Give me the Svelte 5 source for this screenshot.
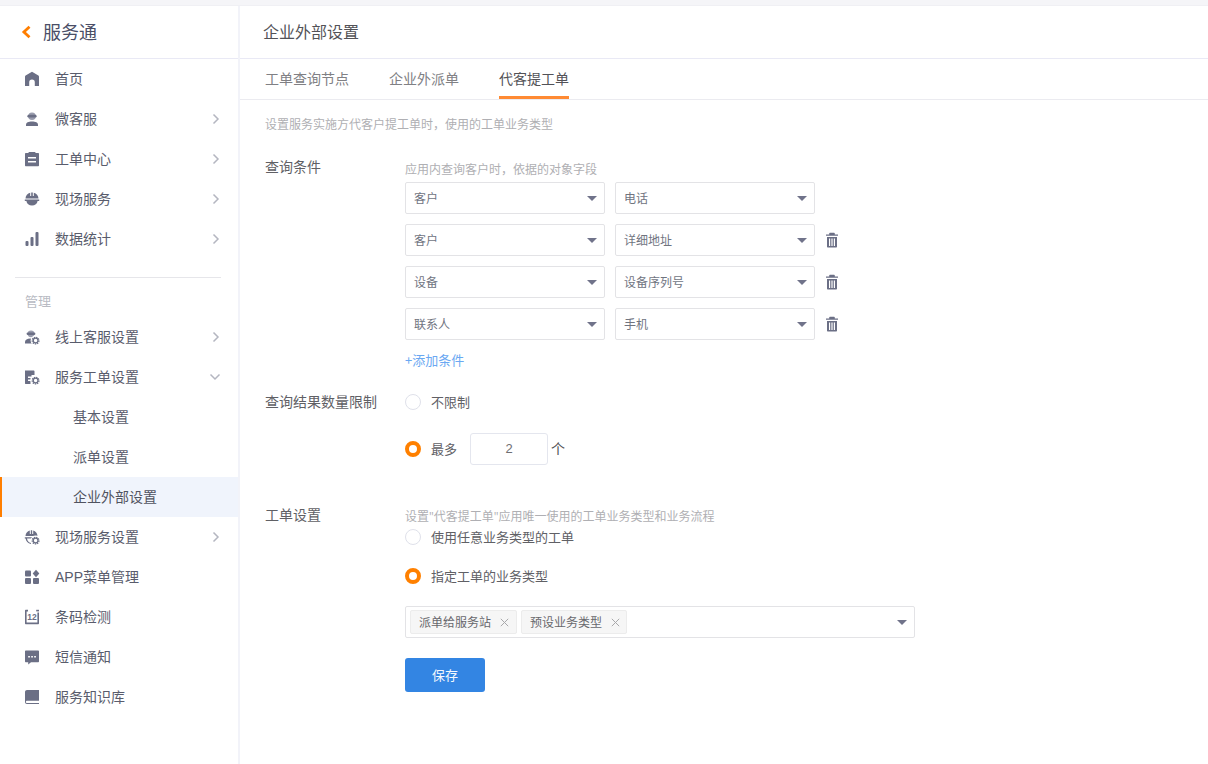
<script>
  const topMenu = [
    { label: "首页", icon: "home" },
    { label: "微客服", icon: "agent", arrow: "right" },
    { label: "工单中心", icon: "clipboard", arrow: "right" },
    { label: "现场服务", icon: "helmet", arrow: "right" },
    { label: "数据统计", icon: "bars", arrow: "right" },
  ];
  const adminMenu = [
    { label: "线上客服设置", icon: "agent-gear", arrow: "right" },
    { label: "服务工单设置", icon: "clipboard-gear", arrow: "down" },
    { label: "基本设置", sub: true },
    { label: "派单设置", sub: true },
    { label: "企业外部设置", sub: true, active: true },
    { label: "现场服务设置", icon: "helmet-gear", arrow: "right" },
    { label: "APP菜单管理", icon: "apps" },
    { label: "条码检测", icon: "code" },
    { label: "短信通知", icon: "chat" },
    { label: "服务知识库", icon: "book" },
  ];
  const tabs = ["工单查询节点", "企业外派单", "代客提工单"];
  const conditions = [
    ["客户", "电话"],
    ["客户", "详细地址"],
    ["设备", "设备序列号"],
    ["联系人", "手机"],
  ];
  const tags = ["派单给服务站", "预设业务类型"];
</script>

{#snippet gear()}
  <circle cx="11.6" cy="11.6" r="5" fill="#fff" />
  <circle cx="11.6" cy="11.6" r="3.4" fill="none" stroke="#6b6f85" stroke-width="1.2" stroke-dasharray="1.4 0.9" />
  <circle cx="11.6" cy="11.6" r="2.4" fill="none" stroke="#6b6f85" stroke-width="1.3" />
{/snippet}

{#snippet icon(name)}
  <svg class="icon" viewBox="0 0 16 16" fill="#6b6f85">
    {#if name === "home"}
      <path d="M8 .8 14.4 4.6c.4.3.6.6.6 1.1V15H10.800v-3.600a2.800 2.800 0 0 0-5.600 0V15H1V5.700c0-.5.2-.8.6-1.100Z" />
    {:else if name === "agent"}
      <circle cx="8" cy="5.200" r="3.800" fill="#9a9dae" />
      <rect x="3.400" y="3.800" width="9.200" height="2.800" rx="1.400" />
      <path d="M2 15v-1.500c0-1.900 2.400-3.100 6-3.100s6 1.200 6 3.100V15Z" />
    {:else if name === "clipboard"}
      <path fill-rule="evenodd" d="M2 2h2.600V1h6.800v1H14c.6 0 1 .4 1 1v11.200c0 .6-.4 1-1 1H2c-.6 0-1-.4-1-1V3c0-.6.4-1 1-1Zm2 4v1.600h8V6Zm0 4v1.600h8V10Z" />
    {:else if name === "helmet"}
      <path d="M1.500 7.400C1.600 4.600 3.600 2.400 6.200 1.800V5h1V1.400h1.600V5h1V1.800c2.600.6 4.600 2.800 4.700 5.600Z" />
      <path d="M.8 8.600h14.400V10H13.600c-.4 2.800-2.600 4.600-5.600 4.600S2.800 12.800 2.400 10H.8Z" />
    {:else if name === "bars"}
      <rect x="1.500" y="10" width="3" height="5" rx="1" />
      <rect x="6.500" y="6" width="3" height="9" rx="1" />
      <rect x="11.500" y="1" width="3" height="14" rx="1" />
    {:else if name === "agent-gear"}
      <circle cx="7" cy="4.800" r="3.400" fill="#9a9dae" />
      <rect x="2.600" y="3.400" width="8.800" height="2.600" rx="1.300" />
      <path d="M1 14.500v-1.800c0-2 2.300-3.300 5-3.300s5 1.300 5 3.300v1.800Z" />
      {@render gear()}
    {:else if name === "clipboard-gear"}
      <path d="M1 1.500h8.500c.6 0 1 .4 1 1V6H7.500v1.500H4V9h2.500v1.500H4V12h2.500v3H1.500c-.3 0-.5-.2-.5-.5Z" />
      {@render gear()}
    {:else if name === "helmet-gear"}
      <path d="M1.500 7C1.600 4.400 3.400 2.200 5.800 1.600V5h1V1.300h1.400V5h1V1.600c2.400.6 4.200 2.800 4.300 5.400Z" />
      <path d="M.8 8.200h8.700v1.400H3c.3 2.400 1.800 4 4 4.500v1C3.800 14.600 2 12.400 1.600 9.600H.8Z" />
      {@render gear()}
    {:else if name === "apps"}
      <rect x="1" y="1.500" width="6" height="6" rx="1" />
      <rect x="1" y="9" width="6" height="6" rx="1" />
      <rect x="9" y="9" width="6" height="6" rx="1" />
      <path d="M12 .8 15.300 4.500 12 8.200 8.700 4.500Z" />
    {:else if name === "code"}
      <path d="M2 .8h2v1.600H2.600v11.200h10.800V3.400H15v10.800c0 .6-.4 1-1 1H2c-.6 0-1-.4-1-1V1.800c0-.6.4-1 1-1Z" />
      <rect x="12.200" y=".8" width="2.800" height="1.600" />
      <text x="8" y="11.300" text-anchor="middle" class="icon-num">12</text>
    {:else if name === "chat"}
      <path fill-rule="evenodd" d="M2 1.500h12c.6 0 1 .4 1 1v9.800c0 .6-.4 1-1 1H7l-2.800 2.200v-2.200H2c-.6 0-1-.4-1-1V2.500c0-.6.4-1 1-1Zm2.200 5.400v1.700h1.700V6.900Zm3 0v1.700h1.700V6.900Zm3 0v1.700h1.700V6.900Z" />
    {:else if name === "book"}
      <path d="M3 1h12v10.800H3.200c-.8 0-1.300.5-1.300 1.100s.5 1.100 1.300 1.100H15v1H3c-1.200 0-2-.9-2-2V3c0-1.100.9-2 2-2Z" />
    {/if}
  </svg>
{/snippet}

{#snippet menuRow(item)}
  <div class="item" class:sub={item.sub} class:active={item.active}>
    {#if item.icon}
      {@render icon(item.icon)}
    {/if}
    <span class="item-label">{item.label}</span>
    {#if item.arrow === "right"}
      <svg class="arrow" viewBox="0 0 10 12"><path d="M2.500 1.500 7 6l-4.500 4.500" /></svg>
    {:else if item.arrow === "down"}
      <svg class="arrow down" viewBox="0 0 12 10"><path d="M1.500 2.500 6 7l4.500-4.500" /></svg>
    {/if}
  </div>
{/snippet}

{#snippet select(text)}
  <div class="select">
    <span class="select-text">{text}</span>
    <i class="caret"></i>
  </div>
{/snippet}

{#snippet radio(text, checked)}
  <div class="radio-row">
    <span class="radio" class:checked></span>
    <span class="radio-text">{text}</span>
  </div>
{/snippet}

<div class="page">
  <div class="top-strip"></div>
  <div class="shell">
    <aside class="sidebar">
      <div class="brand">
        <svg class="back" viewBox="0 0 10 14"><path d="M8.500 1.800 2.900 7l5.600 5.200" /></svg>
        <span class="brand-text">服务通</span>
      </div>
      {#each topMenu as item}
        {@render menuRow(item)}
      {/each}
      <div class="divider"></div>
      <div class="group-title">管理</div>
      {#each adminMenu as item}
        {@render menuRow(item)}
      {/each}
    </aside>

    <main class="main">
      <header class="title">企业外部设置</header>
      <nav class="tabs">
        {#each tabs as tab, i}
          <div class="tab" class:current={i === 2}>{tab}</div>
        {/each}
      </nav>
      <div class="content">
        <p class="desc">设置服务实施方代客户提工单时，使用的工单业务类型</p>

        <section class="section first">
          <div class="label">查询条件</div>
          <div class="body">
            <div class="hint">应用内查询客户时，依据的对象字段</div>
            <div class="conditions">
              {#each conditions as row, i}
                <div class="condition">
                  {@render select(row[0])}
                  {@render select(row[1])}
                  {#if i > 0}
                    <svg class="trash" viewBox="0 0 14 16" fill="#6b6f85">
                      <path fill-rule="evenodd" d="M5 .8h4c.5 0 .8.3.8.8v.8H13v1.300H1V2.400h3.200v-.8c0-.5.3-.8.8-.8ZM2 5h10v9.500c0 .6-.4 1-1 1H3c-.6 0-1-.4-1-1Zm2 1.500v7.500h1.200V6.500Zm2.400 0v7.500h1.200V6.500Zm2.400 0v7.500H10V6.500Z" />
                    </svg>
                  {/if}
                </div>
              {/each}
            </div>
            <div class="add">+添加条件</div>
          </div>
        </section>

        <section class="section limit">
          <div class="label">查询结果数量限制</div>
          <div class="body">
            {@render radio("不限制", false)}
            <div class="most">
              {@render radio("最多", true)}
              <div class="number">2</div>
              <span class="unit">个</span>
            </div>
          </div>
        </section>

        <section class="section order">
          <div class="label">工单设置</div>
          <div class="body">
            <div class="hint quoted">设置"代客提工单"应用唯一使用的工单业务类型和业务流程</div>
            <div class="any">{@render radio("使用任意业务类型的工单", false)}</div>
            <div class="specific">{@render radio("指定工单的业务类型", true)}</div>
            <div class="multi">
              {#each tags as tag}
                <span class="tag">
                  <span class="tag-text">{tag}</span>
                  <svg class="close" viewBox="0 0 9 9"><path d="M.8.8l7.400 7.400M8.200.8.8 8.200" /></svg>
                </span>
              {/each}
              <i class="caret"></i>
            </div>
            <button class="save">保存</button>
          </div>
        </section>
      </div>
    </main>
  </div>
</div>

<style>
  :global(body) {
    margin: 0;
    background: #fff;
  }
  .page {
    height: 764px;
    overflow: hidden;
    font-family: "Noto Sans CJK SC", "Liberation Sans", sans-serif;
    color: #4f5263;
  }
  .top-strip {
    height: 5px;
    background: #f5f5f8;
    border-bottom: 1px solid #f0f0f4;
  }
  .shell {
    display: flex;
    height: 758px;
  }
  .sidebar {
    width: 238px;
    flex: none;
    border-right: 2px solid #f2f3f9;
  }
  .brand {
    height: 52px;
    display: flex;
    align-items: center;
    padding-left: 21px;
    border-bottom: 1px solid #e9e9f5;
    font-size: 18px;
    color: #4a4e66;
  }
  .brand-text {
    padding-bottom: 2px;
  }
  .back {
    width: 10px;
    height: 14px;
    margin-right: 12px;
  }
  .back path {
    fill: none;
    stroke: #ff7e00;
    stroke-width: 2.800;
  }
  .item {
    height: 40px;
    display: flex;
    align-items: center;
    padding-left: 24px;
    font-size: 14px;
    color: #595c6c;
  }
  .item.sub {
    padding-left: 73px;
  }
  .item.active {
    background: #f0f4fc;
    box-shadow: inset 2px 0 0 #ff7e00;
    color: #505360;
  }
  .icon {
    width: 16px;
    height: 16px;
    margin-right: 15px;
    flex: none;
  }
  .icon-num {
    font-family: "Liberation Sans", sans-serif;
    font-size: 8.500px;
    font-weight: 700;
  }
  .item-label {
    flex: 1;
    padding-bottom: 2px;
    font-family: "Liberation Sans", "Noto Sans CJK SC", sans-serif;
  }
  .arrow {
    width: 10px;
    height: 12px;
    margin-right: 17px;
    flex: none;
  }
  .arrow.down {
    width: 12px;
    height: 10px;
    margin-right: 17px;
  }
  .arrow path {
    fill: none;
    stroke: #b4b6c0;
    stroke-width: 1.500;
  }
  .divider {
    height: 1px;
    margin: 18px 17px 0 15px;
    background: #e6e6ea;
  }
  .group-title {
    height: 19px;
    margin: 14px 0 6px;
    padding-left: 25px;
    font-size: 13px;
    line-height: 17px;
    color: #b9bbc3;
  }
  .main {
    flex: 1;
    min-width: 0;
  }
  .title {
    height: 52px;
    line-height: 50px;
    padding-left: 23px;
    font-size: 16px;
    color: #525257;
    border-bottom: 1px solid #e9e9f5;
  }
  .tabs {
    height: 40px;
    display: flex;
    gap: 40px;
    padding-left: 25px;
    border-bottom: 1px solid #ebebf0;
  }
  .tab {
    height: 40px;
    line-height: 38px;
    box-sizing: border-box;
    font-size: 14px;
    color: #808084;
  }
  .tab.current {
    color: #525257;
    border-bottom: 3px solid #ff8a33;
  }
  .content {
    padding-left: 25px;
  }
  .desc {
    margin: 16px 0 0;
    font-size: 12px;
    line-height: 16px;
    color: #afafb3;
  }
  .section {
    display: flex;
  }
  .section.first {
    margin-top: 25px;
  }
  .section.limit {
    margin-top: 21px;
  }
  .section.order {
    margin-top: 40px;
  }
  .label {
    width: 140px;
    flex: none;
    font-size: 14px;
    line-height: 18px;
    color: #606065;
  }
  .hint {
    margin-top: 4px;
    font-size: 12px;
    line-height: 16px;
    color: #afafb3;
  }
  .hint.quoted {
    font-family: "Open Sans", "Noto Sans CJK SC", sans-serif;
  }
  .conditions {
    display: flex;
    flex-direction: column;
    gap: 10px;
    margin-top: 5px;
  }
  .condition {
    display: flex;
    align-items: center;
    gap: 10px;
  }
  .select {
    width: 200px;
    height: 32px;
    box-sizing: border-box;
    display: flex;
    align-items: center;
    justify-content: space-between;
    padding: 0 7px 0 8px;
    border: 1px solid #e3e3e6;
    border-radius: 2px;
    font-size: 12px;
    color: #70747f;
  }
  .select-text {
    padding-bottom: 2px;
  }
  .caret {
    width: 0;
    height: 0;
    border-left: 5px solid transparent;
    border-right: 5px solid transparent;
    border-top: 5px solid #70738a;
    flex: none;
  }
  .trash {
    width: 14px;
    height: 16px;
  }
  .add {
    height: 20px;
    margin-top: 11px;
    font-size: 13px;
    line-height: 18px;
    color: #6aa8f2;
  }
  .radio-row {
    display: flex;
    align-items: center;
    height: 20px;
  }
  .radio {
    width: 16px;
    height: 16px;
    box-sizing: border-box;
    border: 1px solid #dfe1ea;
    border-radius: 50%;
    margin-right: 10px;
    flex: none;
    background: #fff;
  }
  .radio.checked {
    border: 4px solid #ff8000;
  }
  .radio-text {
    padding-bottom: 2px;
    font-size: 13px;
    color: #606065;
  }
  .most {
    display: flex;
    align-items: center;
    margin-top: 21px;
  }
  .number {
    width: 78px;
    height: 32px;
    box-sizing: border-box;
    margin-left: 13px;
    border: 1px solid #e4e6ee;
    border-radius: 3px;
    font-size: 13px;
    line-height: 30px;
    text-align: center;
    color: #6e6e72;
    font-family: "Liberation Sans", sans-serif;
  }
  .unit {
    margin-left: 3px;
    padding-bottom: 2px;
    font-size: 14px;
    color: #505054;
  }
  .any {
    margin-top: 2px;
  }
  .specific {
    margin-top: 19px;
  }
  .multi {
    width: 510px;
    height: 32px;
    box-sizing: border-box;
    margin-top: 20px;
    padding: 0 7px 0 4px;
    display: flex;
    align-items: center;
    gap: 4px;
    border: 1px solid #e3e3e6;
    border-radius: 2px;
  }
  .multi .caret {
    margin-left: auto;
  }
  .tag {
    height: 24px;
    width: 106px;
    box-sizing: border-box;
    display: flex;
    align-items: center;
    padding-left: 8px;
    background: #f6f6f6;
    border: 1px solid #ececec;
    border-radius: 2px;
    font-size: 12px;
    color: #68686d;
  }
  .tag:first-child {
    width: 107px;
  }
  .tag-text {
    padding-bottom: 2px;
  }
  .close {
    width: 9px;
    height: 9px;
    margin-left: 9px;
  }
  .close path {
    fill: none;
    stroke: #a8a8ab;
    stroke-width: 1;
  }
  .save {
    display: block;
    width: 80px;
    height: 34px;
    margin-top: 20px;
    padding: 0 0 2px;
    border: 0;
    border-radius: 3px;
    background: #3385e3;
    color: #f4f8fe;
    font-family: inherit;
    font-size: 13px;
  }
</style>
